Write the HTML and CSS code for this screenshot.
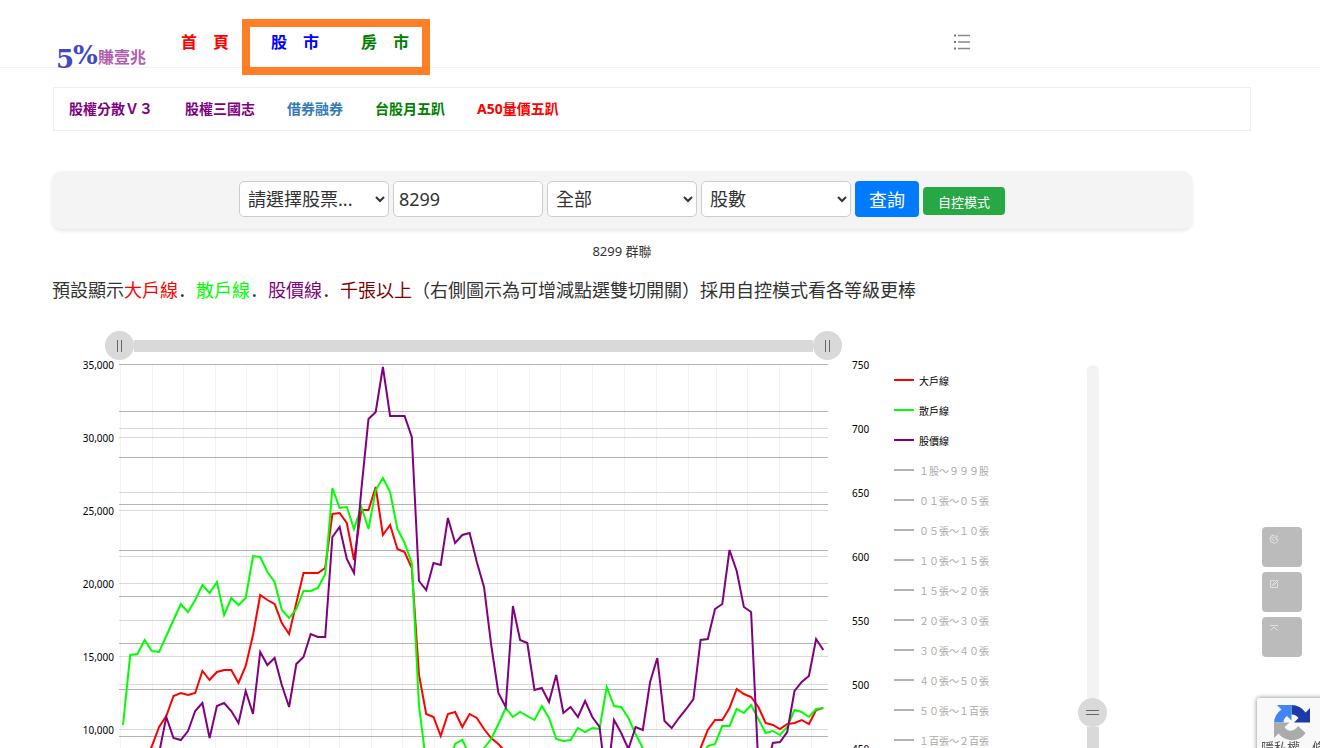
FILE: index.html
```html
<!DOCTYPE html>
<html lang="zh-Hant">
<head>
    <meta charset="UTF-8">
    <meta name="viewport" content="width=device-width, initial-scale=1.0">
    <title>5%賺壹兆 - 8299 群聯</title>
    <link rel="stylesheet" href="styles.css">
</head>
<body>

<header class="site-header">
    <a class="logo" href="#" aria-label="5%賺壹兆">
        <svg width="92" height="32" viewBox="0 0 92 32">
            <text class="logo-five" x="-1" y="27">5</text>
            <text class="logo-percent" x="16" y="23">%</text>
            <text class="logo-name" x="41" y="22">賺壹兆</text>
        </svg>
    </a>
    <nav class="main-nav">
        <a class="red" href="#">首　頁</a>
        <div class="nav-marked">
            <a class="blue" href="#">股　市</a>
            <a class="green" href="#">房　市</a>
        </div>
    </nav>
    <button class="menu-button" type="button" aria-label="選單">
        <svg width="18" height="18" viewBox="0 0 18 18">
            <path d="M5 2.5h12M5 9h12M5 15.5h12" stroke="#888" stroke-width="1.3"/>
            <path d="M1 2.5h2M1 9h2M1 15.5h2" stroke="#777" stroke-width="2"/>
        </svg>
    </button>
</header>

<nav class="sub-nav">
    <a class="purple" href="#">股權分散Ｖ３</a>
    <a class="purple" href="#">股權三國志</a>
    <a class="steel" href="#">借券融券</a>
    <a class="green" href="#">台股月五趴</a>
    <a class="red" href="#">A50量價五趴</a>
</nav>

<main class="content">
    <form class="search-bar" onsubmit="event.preventDefault();">
        <select aria-label="股票">
            <option>請選擇股票...</option>
        </select>
        <input type="text" aria-label="股票代號" value="8299">
        <select aria-label="期間">
            <option>全部</option>
        </select>
        <select aria-label="單位">
            <option>股數</option>
        </select>
        <button class="btn-query" type="submit">查詢</button>
        <button class="btn-mode" type="button">自控模式</button>
    </form>

    <p class="stock-name">8299 群聯</p>
    <p class="hint">預設顯示<span class="red">大戶線</span><span class="dot" lang="ja">．</span><span class="lime">散戶線</span><span class="dot" lang="ja">．</span><span class="purple">股價線</span><span class="dot" lang="ja">．</span><span class="maroon">千張以上</span>（右側圖示為可增減點選雙切開關）採用自控模式看各等級更棒</p>

    <section class="chart">
        <div class="plot">
            <div class="scroll-x">
                <button class="grip" type="button" aria-label="起點"></button>
                <div class="scroll-x-bar"></div>
                <button class="grip" type="button" aria-label="終點"></button>
            </div>
            <svg id="plot" class="plot-svg" width="820" height="420" viewBox="52 360 820 420">
                <g id="grid"></g>
                <g id="lines"></g>
                <g id="labels"></g>
            </svg>
        </div>
        <ul class="legend">
            <li><button type="button"><i class="bg-red"></i>大戶線</button></li>
            <li><button type="button"><i class="bg-lime"></i>散戶線</button></li>
            <li><button type="button"><i class="bg-purple"></i>股價線</button></li>
            <li><button class="off" type="button"><i></i>１股～９９９股</button></li>
            <li><button class="off" type="button"><i></i>０１張～０５張</button></li>
            <li><button class="off" type="button"><i></i>０５張～１０張</button></li>
            <li><button class="off" type="button"><i></i>１０張～１５張</button></li>
            <li><button class="off" type="button"><i></i>１５張～２０張</button></li>
            <li><button class="off" type="button"><i></i>２０張～３０張</button></li>
            <li><button class="off" type="button"><i></i>３０張～４０張</button></li>
            <li><button class="off" type="button"><i></i>４０張～５０張</button></li>
            <li><button class="off" type="button"><i></i>５０張～１百張</button></li>
            <li><button class="off" type="button"><i></i>１百張～２百張</button></li>
        </ul>
        <div class="scroll-y">
            <div class="scroll-y-track"></div>
            <button class="grip grip-y" type="button" aria-label="數值範圍"></button>
            <div class="scroll-y-bar"></div>
        </div>
    </section>
</main>

<div class="float-tools">
    <button type="button" aria-label="夜間模式">
        <svg width="10" height="10" viewBox="0 0 10 10"><path d="M5 1a4 4 0 1 0 4 4.500M5 1c-1 2 .5 4.500 4 4.500M6.500 2h2L6.500 4h2M3 3v2l2 2"/></svg>
    </button>
    <button type="button" aria-label="編輯">
        <svg width="10" height="10" viewBox="0 0 10 10"><path d="M6 1.500H1.500v7h7V4M3.500 6.500l.5-1.500L8 1l1 1-4 4z"/></svg>
    </button>
    <button type="button" aria-label="回到頂端">
        <svg width="10" height="10" viewBox="0 0 10 10"><path d="M1 1.500h8M1.500 6.500L5 3l3.500 3.500"/></svg>
    </button>
</div>

<aside class="captcha">
    <svg width="38" height="38" viewBox="0 0 38 38">
        <path fill="#1c3aa9" d="M37 18.500V4l-4.500 4.500A17.500 17.500 0 0 0 18.500 1v9.500a8 8 0 0 1 7 3.500l-4.500 4.500z"/>
        <path fill="#4285f4" d="M18.500 1H4l4.500 4.500A17.500 17.500 0 0 0 1 18.500h9.500a8 8 0 0 1 3.500-6.500l4.500 4.500z"/>
        <path fill="#ababab" d="M1 18.500V34l4.500-4.500c7 9 20.500 9 27-.5L25 22c-3.500 6-11 6-13.500 1l5-4.500z"/>
    </svg>
    <p><a href="#">隱私權</a><a href="#">條款</a></p>
</aside>

<script src="script.js"></script>
</body>
</html>
```
FILE: styles.css
```css
body {
    font-family: "Noto Sans", "Noto Sans CJK TC", sans-serif;
    margin: 0;
    height: 100vh;
    overflow: hidden;
    background-color: #fff;
    color: #333;
    font-size: 14px;
}

a {
    text-decoration: none;
}

button {
    font-family: inherit;
    cursor: pointer;
}

.red { color: #f00; }
.blue { color: #00f; }
.green { color: #008000; }
.purple { color: #800080; }
.steel { color: #337ab7; }
.lime { color: #0f0; }
.maroon { color: #800000; }

/* header */
.site-header {
    display: flex;
    align-items: flex-start;
    height: 67px;
    padding: 0 349px 0 57px;
    border-bottom: 1px solid #f2f2f2;
}

.logo {
    margin-top: 41px;
    width: 92px;
    height: 32px;
}

.logo svg {
    display: block;
    overflow: visible;
}

.logo-five,
.logo-percent {
    font-family: "DejaVu Serif", serif;
    font-weight: bold;
    font-size: 26px;
    fill: #4048c8;
}

.logo-name {
    font-size: 16px;
    font-weight: bold;
    fill: #b060b0;
}

.main-nav {
    display: flex;
    flex: 1;
    margin-left: 32px;
    font-size: 16px;
    line-height: 24px;
    font-weight: bold;
}

.main-nav > a {
    margin-top: 30px;
}

.nav-marked {
    display: flex;
    gap: 42px;
    box-sizing: border-box;
    height: 56px;
    margin: 19px 0 0 13px;
    padding: 3px 13px 0 21px;
    border: 8px solid #ff7f27;
}

.menu-button {
    margin-top: 33px;
    padding: 0;
    border: none;
    background: none;
    height: 18px;
}

.menu-button svg {
    display: block;
}

/* second menu */
.sub-nav {
    display: flex;
    gap: 32px;
    margin: 19px 69px 0 53px;
    padding: 0 15px;
    border: 1px solid #eee;
    line-height: 42px;
    font-weight: bold;
}

/* query form */
.content {
    margin: 40px 128px 0 52px;
}

.search-bar {
    display: flex;
    justify-content: center;
    align-items: center;
    gap: 4px;
    box-sizing: border-box;
    height: 58px;
    padding: 9px 10px 11px;
    border-radius: 10px;
    background-color: #f4f4f4;
    box-shadow: 0 2px 4px rgba(0, 0, 0, 0.1);
}

.search-bar select,
.search-bar input {
    box-sizing: border-box;
    width: 150px;
    height: 36px;
    border: 1px solid #ccc;
    border-radius: 5px;
    background-color: #fff;
    color: #333;
    font-family: inherit;
    font-size: 18px;
}

.search-bar select {
    padding: 0 0 0 4px;
}

.search-bar input {
    padding: 0 5px;
}

.btn-query,
.btn-mode {
    border: none;
    border-radius: 4px;
    color: #fff;
    padding: 0 14px;
}

.btn-query {
    height: 36px;
    background-color: #007bff;
    font-size: 18px;
}

.btn-mode {
    height: 28px;
    margin-top: 4px;
    padding: 0 15px;
    background-color: #28a745;
    font-size: 13px;
}

.stock-name {
    margin: 12px 0 0;
    font-size: 13px;
    line-height: 20px;
    text-align: center;
}

.hint {
    margin: 14px 0 0;
    font-size: 18px;
    line-height: 30px;
}

.dot {
    font-family: "Noto Sans CJK JP", sans-serif;
    line-height: 1;
}

/* chart */
.chart {
    display: flex;
    margin-top: 26px;
}

.plot {
    width: 820px;
}

.scroll-x {
    display: flex;
    align-items: center;
    width: 737px;
    margin-left: 53px;
}

.scroll-x-bar {
    flex: 1;
    height: 12px;
    background-color: #d9d9d9;
}

.grip {
    flex: none;
    width: 29px;
    height: 29px;
    padding: 0;
    border: none;
    border-radius: 50%;
    background: linear-gradient(#666, #666) 12px 9px / 1px 12px no-repeat, linear-gradient(#666, #666) 16px 9px / 1px 12px no-repeat #d9d9d9;
}

.grip-y {
    background: linear-gradient(#666, #666) 8px 12px / 13px 1px no-repeat, linear-gradient(#666, #666) 8px 16px / 13px 1px no-repeat #d9d9d9;
}

.plot-svg {
    display: block;
    overflow: visible;
}

.plot-svg text {
    font-size: 10px;
    fill: #000;
}

.grid-x {
    stroke: #f3f3f3;
}

.grid-light {
    stroke: #d9d9d9;
}

.grid-dark {
    stroke: #b3b3b3;
}

.series {
    fill: none;
    stroke-width: 2;
}

.legend {
    list-style: none;
    margin: 34px 0 0 22px;
    padding: 0;
}

.legend button {
    display: flex;
    align-items: center;
    gap: 5px;
    height: 30px;
    padding: 0;
    border: none;
    background: none;
    color: #000;
    font-size: 10px;
}

.legend i {
    width: 20px;
    height: 2px;
    background-color: #b3b3b3;
}

.legend .off {
    color: #aaa;
}

.legend .bg-red { background-color: #f00; }
.legend .bg-lime { background-color: #0f0; }
.legend .bg-purple { background-color: #800080; }

.scroll-y {
    display: flex;
    flex-direction: column;
    align-items: center;
    margin: 34px 85px 0 auto;
}

.scroll-y-track {
    width: 12px;
    height: 333px;
    border-radius: 6px 6px 0 0;
    background-color: #f3f3f3;
}

.scroll-y-bar {
    width: 12px;
    flex: 1;
    background-color: #d9d9d9;
}

/* floating tools */
.float-tools {
    position: fixed;
    right: 18px;
    bottom: 91px;
    display: flex;
    flex-direction: column;
    gap: 5px;
}

.float-tools button {
    display: flex;
    align-items: flex-start;
    width: 40px;
    height: 40px;
    padding: 7px;
    border: none;
    border-radius: 4px;
    background-color: #bbb;
}

.float-tools svg {
    fill: none;
    stroke: #e0e0e0;
}

.captcha {
    position: fixed;
    left: calc(100% - 63px);
    top: calc(100% - 50px);
    width: 256px;
    height: 60px;
    border-radius: 2px;
    background-color: #f9f9f9;
    box-shadow: 0 0 5px #808080;
}

.captcha svg {
    display: block;
    margin: 6px 0 0 16px;
}

.captcha p {
    display: flex;
    gap: 12px;
    margin: -3px 0 0 4px;
    font-size: 13px;
    line-height: 16px;
}

.captcha a {
    color: #555;
}
```
FILE: script.js
```js
const SVG_NS = 'http://www.w3.org/2000/svg';
const LEFT = 119, RIGHT = 828, TOP = 364, BOTTOM = 780;
const FIRST_X = 123, STEP = 7.22;

// 每週一點
const series = [
    {
        color: '#f00',
        y: [790, 785, 775, 762, 746, 727, 716, 696, 693, 695, 693, 671, 680, 672, 670, 670, 683, 666, 635, 595,
            600, 604, 623, 634, 603, 573, 573, 573, 568, 514, 513, 523, 560, 510, 510, 487, 535, 525, 549, 552,
            568, 675, 714, 717, 736, 714, 712, 727, 714, 718, 729, 738, 744, 752, 762, 766, 768, 770, 770, 770,
            770, 770, 770, 770, 770, 770, 770, 770, 770, 770, 770, 770, 770, 770, 770, 770, 770, 770, 770, 765,
            748, 730, 720, 720, 708, 689, 694, 697, 707, 723, 725, 729, 724, 723, 720, 724, 710, 708]
    },
    {
        color: '#0f0',
        y: [725, 655, 654, 640, 651, 652, 636, 620, 604, 612, 600, 585, 593, 582, 615, 598, 605, 598, 556, 557,
            572, 582, 610, 618, 609, 591, 591, 588, 574, 488, 508, 507, 529, 507, 529, 490, 478, 492, 529, 543,
            563, 706, 763, 765, 765, 765, 744, 740, 755, 758, 748, 739, 724, 708, 717, 712, 716, 720, 706, 718,
            739, 741, 740, 728, 732, 728, 729, 687, 706, 707, 718, 734, 748, 760, 765, 768, 770, 770, 770, 770,
            760, 746, 744, 726, 726, 709, 713, 705, 719, 733, 731, 735, 727, 710, 712, 717, 709, 708]
    },
    {
        color: '#800080',
        y: [790, 790, 785, 780, 770, 753, 717, 738, 740, 731, 711, 703, 738, 706, 703, 711, 723, 691, 714, 652,
            665, 658, 685, 707, 664, 657, 634, 637, 637, 537, 527, 559, 573, 490, 419, 412, 367, 416, 416, 416,
            437, 581, 590, 563, 565, 518, 543, 535, 533, 562, 587, 645, 693, 707, 606, 640, 643, 690, 688, 702,
            675, 713, 707, 717, 701, 717, 727, 785, 720, 733, 749, 727, 730, 682, 658, 721, 728, 718, 709, 699,
            640, 639, 609, 604, 550, 571, 607, 612, 766, 772, 743, 742, 732, 691, 682, 676, 639, 650]
    }
];

function add(parent, name, attrs, text) {
    const el = document.createElementNS(SVG_NS, name);
    for (const key in attrs) {
        el.setAttribute(key, attrs[key]);
    }
    if (text) {
        el.textContent = text;
    }
    document.getElementById(parent).appendChild(el);
}

function gridRow(y, cls) {
    add('grid', 'path', {class: cls, d: `M${LEFT} ${y + 0.5}H${RIGHT}`});
}

[120, 152, 183, 215, 246, 277, 309, 339, 371, 402, 434, 465, 497, 529, 560, 592, 624, 656, 688, 716, 747, 779, 811]
    .forEach(x => add('grid', 'path', {class: 'grid-x', d: `M${x + 0.5} ${TOP}V${BOTTOM}`}));

// 左軸：張數
['35,000', '30,000', '25,000', '20,000', '15,000', '10,000'].forEach((label, i) => {
    const y = TOP + i * 73;
    gridRow(y, 'grid-light');
    add('labels', 'text', {x: 114, y: y + 5, 'text-anchor': 'end'}, label);
});

// 右軸：股價
['750', '700', '650', '600', '550', '500', '450'].forEach((label, i) => {
    const y = TOP + i * 64;
    gridRow(y, 'grid-light');
    add('labels', 'text', {x: 852, y: y + 5}, label);
});

[364, 411, 457, 504, 550, 596, 643, 689, 736].forEach(y => gridRow(y, 'grid-dark'));

series.forEach(s => {
    const points = s.y.map((y, i) => (FIRST_X + i * STEP).toFixed(1) + ',' + y).join(' ');
    add('lines', 'polyline', {class: 'series', stroke: s.color, points: points});
});
```
